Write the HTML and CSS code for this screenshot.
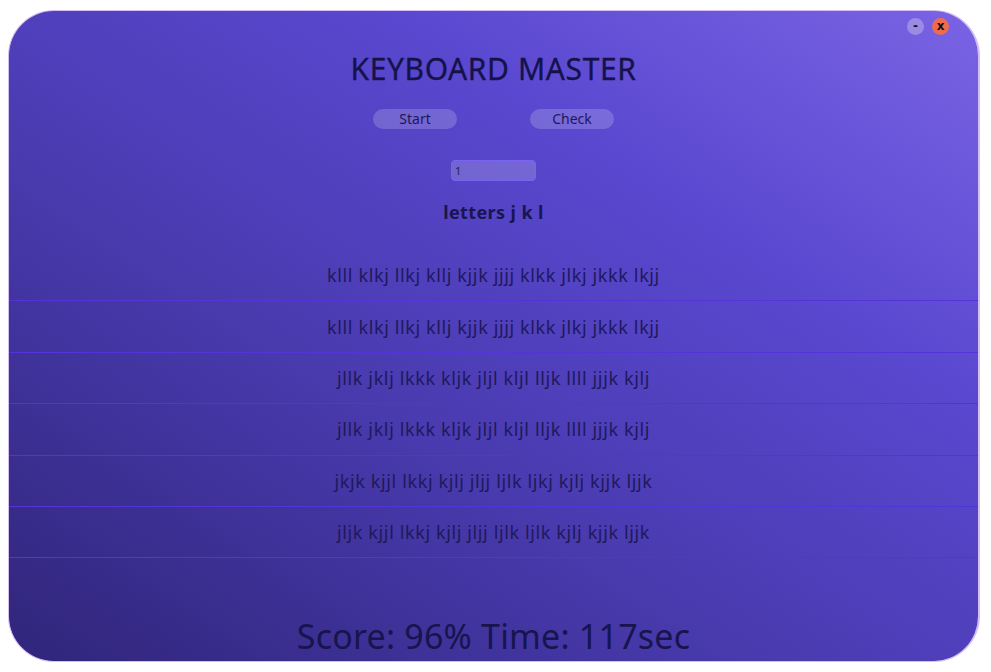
FILE: index.html
```html
<!DOCTYPE html>
<html lang="en">
<head>
<meta charset="utf-8">
<title>Keyboard Master</title>
<link rel="stylesheet" href="styles.css">
</head>
<body>
<div class="window">
  <div class="topbar">
    <button class="ctl ctl-min">-</button>
    <button class="ctl ctl-close">x</button>
  </div>
  <h1 class="title">KEYBOARD MASTER</h1>
  <div class="actions">
    <button class="btn">Start</button>
    <button class="btn">Check</button>
  </div>
  <input class="level" type="text" value="1">
  <div class="letters">letters j k l</div>
  <div class="rows">
    <div class="row">klll klkj llkj kllj kjjk jjjj klkk jlkj jkkk lkjj</div>
    <div class="row">klll klkj llkj kllj kjjk jjjj klkk jlkj jkkk lkjj</div>
    <div class="row">jllk jklj lkkk kljk jljl kljl lljk llll jjjk kjlj</div>
    <div class="row">jllk jklj lkkk kljk jljl kljl lljk llll jjjk kjlj</div>
    <div class="row">jkjk kjjl lkkj kjlj jljj ljlk ljkj kjlj kjjk ljjk</div>
    <div class="row">jljk kjjl lkkj kjlj jljj ljlk ljlk kjlj kjjk ljjk</div>
  </div>
  <div class="score">Score: 96% Time: 117sec</div>
</div>
</body>
</html>
```
FILE: styles.css
```css
html, body {
  margin: 0;
  padding: 0;
  background: #ffffff;
}
body {
  padding: 10px 11px 10px 8px;
  font-family: "Noto Sans", "Open Sans", "DejaVu Sans", sans-serif;
}
.window {
  width: 972px;
  height: 652px;
  box-sizing: border-box;
  border-radius: 46px;
  border: 1px solid #d6bdf2;
  border-right-width: 2px;
  background: linear-gradient(to top right, #30257a 0%, #4a3bb0 40%, #5a48d0 70%, #7a64e4 100%);
  display: flex;
  flex-direction: column;
  align-items: center;
  overflow: hidden;
  color: #17144f;
}
.topbar {
  align-self: stretch;
  display: flex;
  justify-content: flex-end;
  gap: 8px;
  padding: 7px 29px 0 0;
  height: 17px;
}
.ctl {
  width: 17px;
  height: 17px;
  border-radius: 50%;
  border: none;
  padding: 0;
  font-family: "DejaVu Sans", sans-serif;
  font-weight: bold;
  font-size: 12px;
  line-height: 17px;
  color: #111;
  text-align: center;
}
.ctl-min {
  background: #9b8be6;
}
.ctl-close {
  background: #f06a4e;
}
.title {
  margin: 16px 0 0;
  font-size: 30px;
  font-weight: normal;
  line-height: 36px;
  letter-spacing: 0.6px;
  color: #15124a;
  -webkit-text-stroke: 0.3px #15124a;
}
.actions {
  display: flex;
  gap: 73px;
  margin-top: 22px;
}
.btn {
  width: 84px;
  height: 20px;
  border: none;
  border-radius: 10px;
  background: rgba(255, 255, 255, 0.18);
  font-family: inherit;
  font-size: 14px;
  line-height: 20px;
  padding: 0;
  color: #1c1858;
}
.level {
  margin-top: 31px;
  width: 85px;
  height: 21px;
  box-sizing: border-box;
  border: 1px solid #7c62f2;
  border-radius: 4px;
  background: rgba(255, 255, 255, 0.18);
  font-family: inherit;
  font-size: 11px;
  color: #221d5e;
  padding: 0 3px;
}
.letters {
  margin-top: 20px;
  font-size: 18px;
  font-weight: bold;
  line-height: 22px;
  letter-spacing: 0.4px;
  color: #191551;
}
.rows {
  align-self: stretch;
  margin-top: 27px;
  display: flex;
  flex-direction: column;
}
.row {
  height: 50.4px;
  border-bottom: 1px solid #5434da;
  display: flex;
  align-items: center;
  justify-content: center;
  font-size: 18px;
  letter-spacing: 0.62px;
  color: #1e195b;
}
.score {
  margin-top: 58px;
  font-size: 34px;
  line-height: 40px;
  letter-spacing: 0.2px;
  color: #17144e;
}
```
